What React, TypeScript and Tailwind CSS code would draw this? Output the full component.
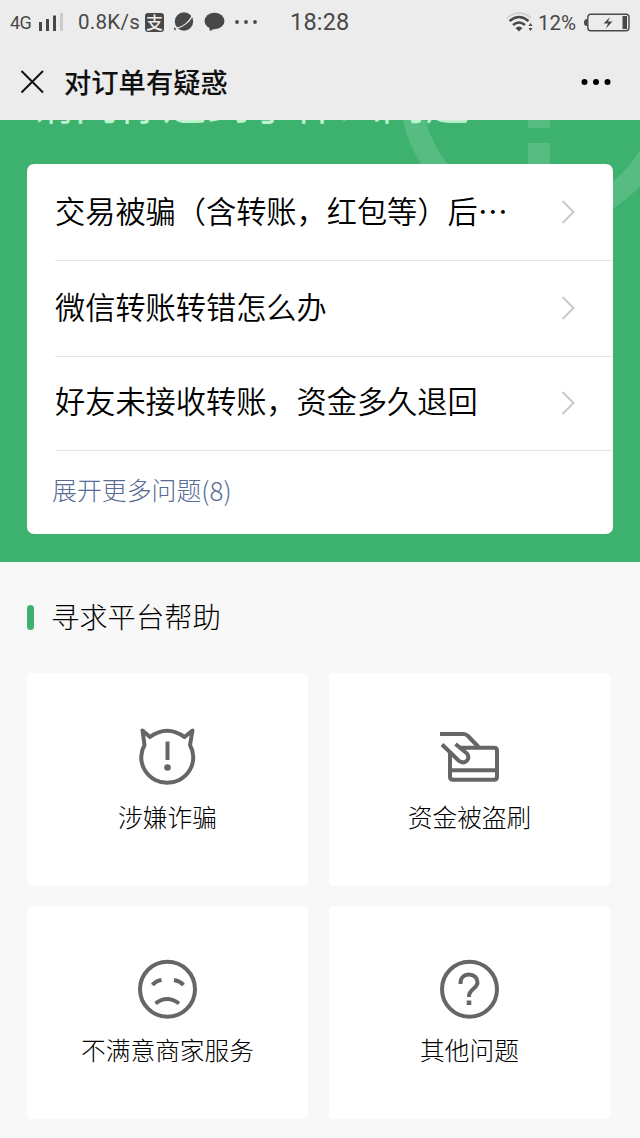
import type { ReactNode } from "react";

const iconProps = { fill: "none", stroke: "#666666", strokeWidth: 4 } as const;

const questions = [
  { text: "交易被骗（含转账，红包等）后⋯", row: "h-[97px]" },
  { text: "微信转账转错怎么办", row: "h-[96px] pb-px" },
  { text: "好友未接收转账，资金多久退回", row: "h-[94px] pb-0.5" },
];

const DevilIcon = () => (
  <svg className="mr-0.5 size-16" viewBox="0 0 64 64" {...iconProps} strokeLinejoin="round">
    <path d="M15 13Q32 .5 49.500 13L57.500 6.500L55 21A26 25.500 0 1 1 9.500 21L7.500 6.500Z" />
    <path d="M32.500 17.500V36" />
    <circle cx="32.500" cy="43.500" r="3.300" fill="#666666" stroke="none" />
  </svg>
);

const CardIcon = () => (
  <svg className="mr-0.5 size-16" viewBox="0 0 64 64" {...iconProps}>
    <path d="M3 10H26.500Q29 10 31 12L41.500 23" />
    <path d="M22 23.700H57Q60 23.700 60 26.700V52.700Q60 55.700 57 55.700H16Q13 55.700 13 52.700V28" />
    <path d="M13 46.300H60" />
    <path d="M5 20.500L21.500 36.500Q26 40 29.500 37T30 29.500L18.500 20" />
  </svg>
);

const SadIcon = () => (
  <svg className="mr-0.5 size-16" viewBox="0 0 64 64" {...iconProps}>
    <circle cx="32.500" cy="32.200" r="27.500" />
    <path d="M17.500 28Q20.500 24 26.500 23M39 23Q45 24 48.500 28" />
    <path d="M20.500 46.500Q32 37.500 44 46.500" />
  </svg>
);

const QuestionIcon = () => (
  <svg className="mr-0.5 size-16" viewBox="0 0 64 64" {...iconProps}>
    <circle cx="32.500" cy="32.200" r="27.500" />
    <path d="M23.500 27V26C23.500 21 27 17.500 32 17.500S40.500 21 40.500 25.500C40.500 31.500 32 32 32 39V40" />
    <path d="M32 43.500V48" strokeWidth="4.600" />
  </svg>
);

const helpItems: { label: string; icon: ReactNode }[] = [
  { label: "涉嫌诈骗", icon: <DevilIcon /> },
  { label: "资金被盗刷", icon: <CardIcon /> },
  { label: "不满意商家服务", icon: <SadIcon /> },
  { label: "其他问题", icon: <QuestionIcon /> },
];

function StatusBar() {
  return (
    <div className="flex h-11 items-center pl-[10px] pr-[10px] font-[Roboto,sans-serif] text-[#484848]">
      <span className="w-[28px] text-[18px] font-normal tracking-[-0.5px]">4G</span>
      <svg className="h-[18px] w-[26px]" viewBox="0 0 26 18" fill="#484848">
        <path d="M1 9h3v9H1zM8 6h3v12H8zM15 2.500h3V18h-3z" />
        <path d="M22 0h3v18h-3z" fill="#cccccc" />
      </svg>
      <span className="ml-[14px] w-[67px] whitespace-nowrap text-[20.500px] font-normal tracking-[0.3px]">0.8K/s</span>
      <span className="flex size-[19px] items-center justify-center rounded-[3px] bg-[#484848] pb-0.5 font-['Noto_Sans_CJK_SC',sans-serif] text-[17px] leading-none font-medium text-[#ececec]">支</span>
      <svg className="ml-[10px] size-5" viewBox="0 0 20 20">
        <circle cx="10" cy="9.500" r="9.200" fill="#484848" />
        <path d="M2 17.500Q0 18 1 15.500" fill="none" stroke="#484848" strokeWidth="1.200" />
        <path d="M2.500 16.300C8 15.500 16.500 9.500 18 3.500" fill="none" stroke="#ececec" strokeWidth="1.200" />
      </svg>
      <svg className="ml-[10px] h-5 w-[21px]" viewBox="0 0 21 20" fill="#484848">
        <ellipse cx="10.500" cy="9" rx="10" ry="8.300" />
        <path d="M5 14.500L6 19L12 16Z" />
      </svg>
      <svg className="ml-[10px] h-1 w-[22px]" viewBox="0 0 22 4" fill="#484848">
        <circle cx="2" cy="2" r="1.900" />
        <circle cx="11" cy="2" r="1.900" />
        <circle cx="20" cy="2" r="1.900" />
      </svg>
      <span className="ml-[33px] pt-0.5 text-[23.500px] font-normal tracking-[0.2px]">18:28</span>
      <svg className="ml-auto h-5 w-7" viewBox="0 0 28 20" fill="none" strokeWidth="2">
        <path d="M1 6Q13 -4 25 6" stroke="#d2d2d2" />
        <path d="M3.500 9Q13 1 22.500 9M7 13Q13 8 19 13" stroke="#484848" strokeWidth="2.400" />
        <path d="M9.500 16Q13 13 16.500 16L13 19.500Z" fill="#484848" />
        <path d="M22.500 14L24.500 11L26.500 14ZM22.500 16L24.500 19L26.500 16Z" fill="#484848" />
      </svg>
      <span className="ml-[4px] w-[46px] pt-0.5 text-[20.500px] font-normal">12%</span>
      <svg className="h-[19px] w-[46px]" viewBox="0 0 46 19" fill="#484848">
        <path d="M3 6Q0 6 0 9.500T3 13Z" />
        <rect x="3.800" y="1.200" width="41.200" height="16.600" rx="3" fill="none" stroke="#484848" strokeWidth="1.400" />
        <path d="M38.500 3h4.500v13h-4.500z" />
        <path d="M26 4L19.500 10.500H24L22 15.500L28.500 8.500H24Z" />
      </svg>
    </div>
  );
}

export default function App() {
  return (
    <div className="flex h-[1138px] w-[640px] flex-col overflow-hidden bg-[#f8f8f8] font-['Noto_Sans_CJK_SC',sans-serif] font-light text-black">
      <header className="h-[120px] shrink-0 bg-[#ececec]">
        <StatusBar />
        <div className="flex h-[76px] items-center pr-[29px] pl-[20px]">
          <svg className="size-6" viewBox="0 0 24 24" fill="none" stroke="#111111" strokeWidth="2">
            <path d="M1.500 1L23 22.500M23 1L1.500 22.500" />
          </svg>
          <h1 className="ml-5 text-[27.300px] leading-none font-medium text-[#111111]">对订单有疑惑</h1>
          <svg className="ml-auto h-[6px] w-[30px]" viewBox="0 0 30 6">
            <circle cx="3.500" cy="3" r="3" />
            <circle cx="15" cy="3" r="3" />
            <circle cx="26.500" cy="3" r="3" />
          </svg>
        </div>
      </header>

      <section className="relative h-[442px] shrink-0 overflow-hidden bg-[#3db26f] pt-11 pl-[27px]">
        <svg className="absolute top-0 left-0 h-[120px] w-[640px]" viewBox="0 0 640 120">
          <g opacity="0.13">
            <circle cx="539" cy="-30" r="128.500" fill="none" stroke="#ffffff" strokeWidth="22" />
            <path d="M528 0h22v8h-22zM528 23h22v30h-22z" fill="#ffffff" />
          </g>
        </svg>
        <p className="absolute top-[-41px] left-[31px] text-[43.800px] leading-[44px] font-normal whitespace-nowrap text-[#bdf3cd]">请问你遇到了什么问题</p>

        <div className="relative h-[370px] w-[586px] rounded-[7px] bg-white">
          {questions.map((q) => (
            <div key={q.text} className={`ml-7 flex items-center border-b border-[#e4e4e4] pr-[38px] ${q.row}`}>
              <span className="mb-1 text-[30.200px] leading-none font-[350] whitespace-nowrap">{q.text}</span>
              <svg className="ml-auto h-6 w-[14px] shrink-0" viewBox="0 0 14 24" fill="none" stroke="#c8c8c8" strokeWidth="2">
                <path d="M1.500 1L12.500 12L1.500 23" />
              </svg>
            </div>
          ))}
          <a className="ml-[25px] flex h-[77px] items-center text-[24.900px] leading-none text-[#576b95]">
            展开更多问题<span className="text-[26px]">(8)</span>
          </a>
        </div>
      </section>

      <section className="px-[27px] pt-[35px]">
        <div className="flex h-10 items-center">
          <span className="h-[25px] w-[7px] rounded-full bg-[#3db26f]" />
          <h2 className="mb-0.5 ml-[17px] text-[28.300px] leading-none">寻求平台帮助</h2>
        </div>
        <div className="mt-9 grid grid-cols-[281px_281px] gap-x-[21px] gap-y-5">
          {helpItems.map((item) => (
            <div key={item.label} className="flex h-[213px] flex-col items-center rounded-[5px] bg-white pt-[51px]">
              {item.icon}
              <span className="mt-4 text-[24.700px] leading-none">{item.label}</span>
            </div>
          ))}
        </div>
      </section>
    </div>
  );
}
